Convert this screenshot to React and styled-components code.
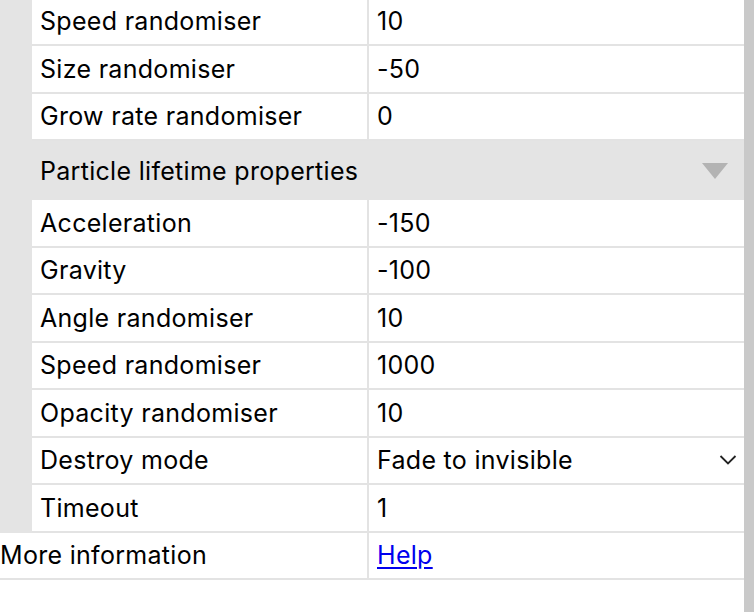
import React from "react";
import styled, { createGlobalStyle } from "styled-components";

const GlobalStyle = createGlobalStyle`
  html, body {
    margin: 0;
    padding: 0;
    background: #ffffff;
  }
  body {
    font-family: Inter, "Liberation Sans", sans-serif;
    color: #000;
  }
`;

const BORDER = "#e3e3e3";
const GROUP_BG = "#e4e4e4";

const Frame = styled.div`
  display: flex;
  width: 754px;
  height: 612px;
  overflow: hidden;
`;

const Sheet = styled.div`
  flex: 1;
  display: flex;
  flex-direction: column;
  margin-top: -1.5px;
`;

const Scrollbar = styled.div`
  width: 10px;
  background: #c9c9c9;
`;

const Group = styled.div`
  display: flex;
  flex-direction: column;
  background: ${GROUP_BG};
  padding-left: 32px;
`;

const Row = styled.div`
  display: grid;
  grid-template-columns: ${(p) => (p.$indent ? "337px" : "369px")} 1fr;
  height: 47.5px;
  box-sizing: border-box;
  border-bottom: 2px solid ${BORDER};
  background: #fff;
  font-size: 25px;
  letter-spacing: 0.3px;
`;

const Label = styled.div`
  display: flex;
  align-items: center;
  padding-left: ${(p) => (p.$flush ? "0" : "8px")};
  border-right: 2px solid ${BORDER};
`;

const Value = styled.div`
  display: flex;
  align-items: center;
  justify-content: space-between;
  padding: 0 7px 0 8px;
`;

const Header = styled.div`
  display: flex;
  align-items: center;
  justify-content: space-between;
  height: 59px;
  margin-left: -32px;
  padding: 0 16px 0 40px;
  font-size: 25px;
  letter-spacing: 0.3px;
`;

const HelpLink = styled.a`
  color: #0000ee;
  text-decoration: underline;
  text-underline-offset: 3px;
`;

const Triangle = () => (
  <svg width="26" height="18" viewBox="0 0 26 18">
    <polygon points="0,1 26,1 13,17" fill="#b3b3b3" />
  </svg>
);

const Chevron = () => (
  <svg width="18" height="12" viewBox="0 0 18 12">
    <polyline points="1.5,2 9,9.5 16.5,2" fill="none" stroke="#222" strokeWidth="1.8" />
  </svg>
);

const top = [
  ["Speed randomiser", "10"],
  ["Size randomiser", "-50"],
  ["Grow rate randomiser", "0"],
];

const lifetime = [
  ["Acceleration", "-150"],
  ["Gravity", "-100"],
  ["Angle randomiser", "10"],
  ["Speed randomiser", "1000"],
  ["Opacity randomiser", "10"],
  ["Destroy mode", "Fade to invisible", true],
  ["Timeout", "1"],
];

const PropRow = ({ label, value, select }) => (
  <Row $indent>
    <Label>{label}</Label>
    <Value>
      {value}
      {select && <Chevron />}
    </Value>
  </Row>
);

export default function App() {
  return (
    <>
      <GlobalStyle />
      <Frame>
        <Sheet>
          <Group>
            {top.map(([l, v]) => (
              <PropRow key={l} label={l} value={v} />
            ))}
            <Header>
              Particle lifetime properties
              <Triangle />
            </Header>
            {lifetime.map(([l, v, s]) => (
              <PropRow key={l + v} label={l} value={v} select={s} />
            ))}
          </Group>
          <Row>
            <Label $flush>More information</Label>
            <Value>
              <HelpLink href="#">Help</HelpLink>
            </Value>
          </Row>
        </Sheet>
        <Scrollbar />
      </Frame>
    </>
  );
}
